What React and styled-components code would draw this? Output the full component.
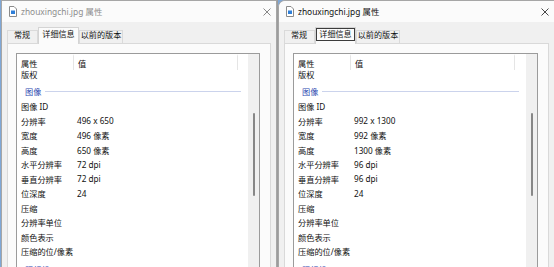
import React from 'react';
import styled, { createGlobalStyle } from 'styled-components';

const Global = createGlobalStyle`
  html, body { margin: 0; padding: 0; }
  body {
    background: #7fa7d6;
    overflow: hidden;
    font-family: "Noto Sans", "Noto Sans CJK SC", sans-serif;
  }
  #root { width: 554px; height: 267px; overflow: hidden; }
`;

const Desktop = styled.div`
  display: flex;
  padding-left: 1px;
  height: 267px;
  overflow: hidden;
`;

const Win = styled.div`
  flex: 0 0 ${p => p.$w}px;
  width: ${p => p.$w}px;
  height: 320px;
  box-sizing: border-box;
  border: 1px solid #a6a6a6;
  border-bottom: none;
  ${p => (p.$first ? 'box-shadow: 1px 0 0 #9c9c9c;' : 'margin-left: 1px;')}
  ${p => (p.$active ? 'border-top-left-radius: 7px;' : '')}
  background: #f0f0f0;
  display: flex;
  flex-direction: column;
  overflow: hidden;
`;

const TitleBar = styled.div`
  height: 21px;
  flex: 0 0 21px;
  display: flex;
  align-items: center;
  padding: 0 5px 0 7px;
  background: #fbfbfb;
  gap: 4px;
`;

const TitleText = styled.span`
  font-size: 8.4px;
  line-height: 12px;
  color: ${p => (p.$active ? '#111' : '#8d8d8d')};
  white-space: nowrap;
`;

const CloseBtn = styled.span`
  margin-left: auto;
  display: flex;
  align-items: center;
  justify-content: center;
  width: 9px;
  height: 9px;
`;

const TabStrip = styled.div`
  height: 21px;
  flex: 0 0 21px;
  display: flex;
  align-items: flex-end;
  padding-left: 5px;
`;

const Tab = styled.div`
  box-sizing: border-box;
  width: ${p => p.$w}px;
  height: ${p => (p.$sel ? 17 : 13)}px;
  border: 1px solid ${p => (p.$sel ? '#d4d4d4' : '#dadada')};
  border-bottom: none;
  background: ${p => (p.$sel ? '#fbfbfb' : '#f0f0f0')};
  display: flex;
  justify-content: ${p => (p.$left ? 'flex-start' : 'center')};
  align-items: flex-start;
  padding-left: ${p => (p.$left ? 3 : 0)}px;
  font-size: 8.1px;
  color: #111;
  white-space: nowrap;
  ${p => (p.$sel ? 'margin-bottom: -1px; position: relative; z-index: 1;' : '')}
`;

const TabLabel = styled.span`
  box-sizing: border-box;
  padding: ${p => (p.$sel ? 1 : 0)}px 3px 0;
  line-height: ${p => (p.$sel ? 10 : 8)}px;
  ${p => (p.$focus ? 'padding: 0 2px 1px; border: 1px solid #3c3c3c;' : '')}
`;

const Panel = styled.div`
  flex: 1;
  margin: 0 5px;
  border: 1px solid #d9d9d9;
  border-bottom: none;
  background: #fbfbfb;
  padding: 9px 10px 0 8px;
  display: flex;
`;

const List = styled.div`
  flex: 1;
  border: 1px solid #9b9b9b;
  background: #fff;
  display: flex;
  overflow: hidden;
`;

const ListMain = styled.div`
  flex: 1;
  display: flex;
  flex-direction: column;
  overflow: hidden;
`;

const Header = styled.div`
  height: 16px;
  flex: 0 0 16px;
  display: flex;
  background: #fff;
  position: relative;
  z-index: 1;
`;

const HeaderCell = styled.div`
  box-sizing: border-box;
  width: ${p => p.$w}px;
  padding-left: 4px;
  display: flex;
  align-items: center;
  font-size: 8.2px;
  color: #111;
  border-right: 1px solid #e5e5e5;
  border-top: 2px solid #fff;
`;

const Body = styled.div`
  flex: 1;
  overflow: hidden;
`;

const Scrolled = styled.div`
  margin-top: -3.5px;
`;

const Row = styled.div`
  height: 14.5px;
  display: flex;
  align-items: center;
  font-size: 8.2px;
  color: #111;
  white-space: nowrap;
`;

const KeyCell = styled.span`
  box-sizing: border-box;
  width: 56px;
  flex: 0 0 56px;
  padding-left: 4px;
`;

const ValCell = styled.span`
  padding-left: 4px;
`;

const GroupRow = styled.div`
  height: 18px;
  box-sizing: border-box;
  padding: 2.5px 7px 0 8px;
  display: flex;
  align-items: center;
  font-size: 8.2px;
  color: #2b48b0;
  white-space: nowrap;
`;

const GroupLine = styled.span`
  flex: 1;
  height: 1px;
  margin-left: 4px;
  background: #cbd3ec;
`;

const ScrollBar = styled.div`
  flex: 0 0 11px;
  background: #f0f0f0;
  display: flex;
  flex-direction: column;
  align-items: center;
  padding-top: 59px;
`;

const Thumb = styled.div`
  width: 2px;
  height: 83px;
  border-radius: 1px;
  background: #878787;
`;

const DocIcon = () => (
  <svg width="8" height="11" viewBox="0 0 8 11">
    <path d="M0.5 0.5H5L7.5 3V10.5H0.5Z" fill="#fff" stroke="#8a8a8a" strokeWidth="1" />
    <rect x="2" y="4.5" width="4" height="3.5" fill="#2f7fd8" />
  </svg>
);

const XIcon = ({ color }) => (
  <svg width="8" height="8" viewBox="0 0 8 8">
    <path d="M0.5 0.5L7.5 7.5M7.5 0.5L0.5 7.5" stroke={color} strokeWidth="0.9" />
  </svg>
);

const makeRows = (d) => [
  { k: '版权' },
  { g: '图像' },
  { k: '图像 ID' },
  { k: '分辨率', v: d.res },
  { k: '宽度', v: d.w },
  { k: '高度', v: d.h },
  { k: '水平分辨率', v: d.dpi },
  { k: '垂直分辨率', v: d.dpi },
  { k: '位深度', v: '24' },
  { k: '压缩' },
  { k: '分辨率单位' },
  { k: '颜色表示' },
  { k: '压缩的位/像素' },
  { g: '照相机' },
  { k: '照相机制造商' },
];

const PropWindow = ({ data, active, first, w }) => (
  <Win $w={w} $active={active} $first={first}>
    <TitleBar>
      <DocIcon />
      <TitleText $active={active}>zhouxingchi.jpg 属性</TitleText>
      <CloseBtn>
        <XIcon color={active ? '#333' : '#7a7a7a'} />
      </CloseBtn>
    </TitleBar>
    <TabStrip>
      <Tab $w={31} $left>
        <TabLabel>常规</TabLabel>
      </Tab>
      <Tab $w={41} $sel>
        <TabLabel $sel $focus={active}>详细信息</TabLabel>
      </Tab>
      <Tab $w={44}>
        <TabLabel>以前的版本</TabLabel>
      </Tab>
    </TabStrip>
    <Panel>
      <List>
        <ListMain>
          <Header>
            <HeaderCell $w={57}>属性</HeaderCell>
            <HeaderCell $w={164}>值</HeaderCell>
          </Header>
          <Body>
            <Scrolled>
              {makeRows(data).map((r, i) =>
                r.g ? (
                  <GroupRow key={i}>
                    {r.g}
                    <GroupLine />
                  </GroupRow>
                ) : (
                  <Row key={i}>
                    <KeyCell>{r.k}</KeyCell>
                    {r.v && <ValCell>{r.v}</ValCell>}
                  </Row>
                )
              )}
            </Scrolled>
          </Body>
        </ListMain>
        <ScrollBar>
          <Thumb />
        </ScrollBar>
      </List>
    </Panel>
  </Win>
);

export default function App() {
  return (
    <>
      <Global />
      <Desktop>
        <PropWindow
          first
          w={276}
          data={{ res: '496 x 650', w: '496 像素', h: '650 像素', dpi: '72 dpi' }}
        />
        <PropWindow
          active
          w={277}
          data={{ res: '992 x 1300', w: '992 像素', h: '1300 像素', dpi: '96 dpi' }}
        />
      </Desktop>
    </>
  );
}
